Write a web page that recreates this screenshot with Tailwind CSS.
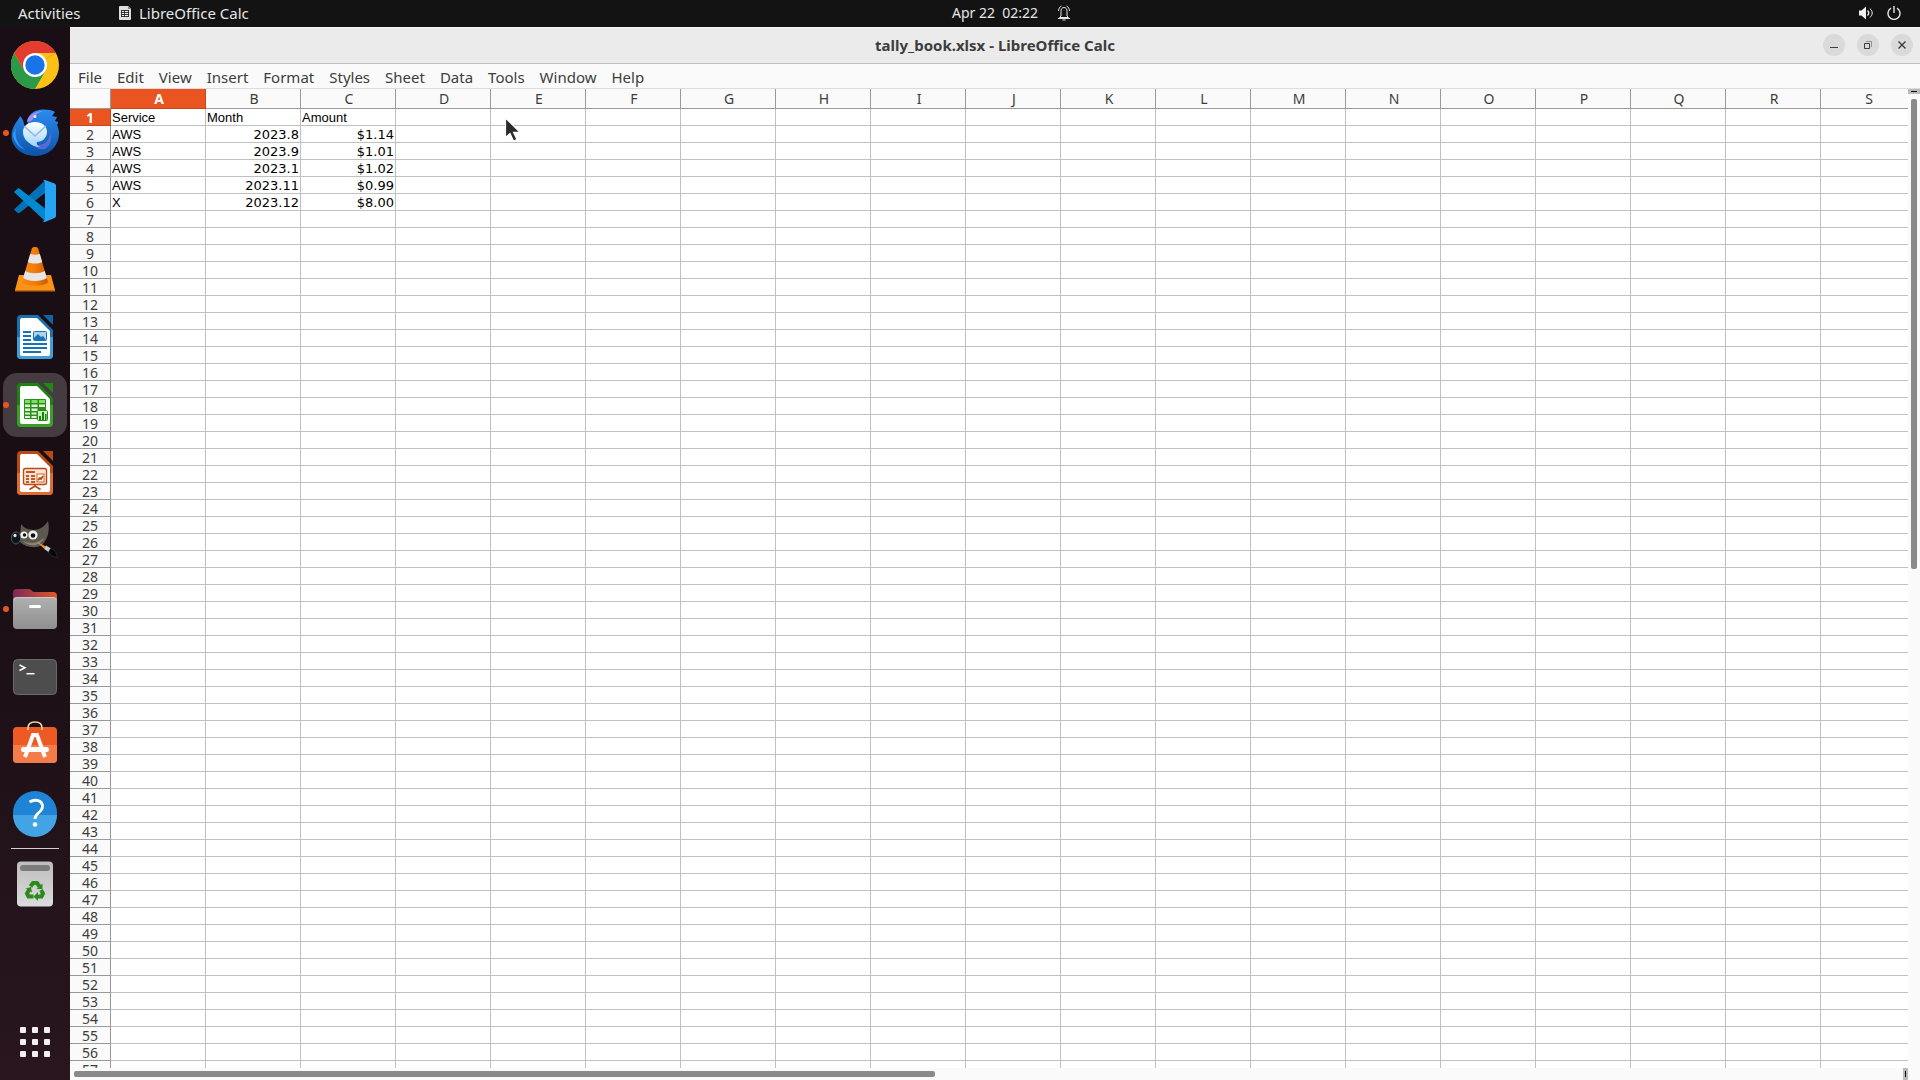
<!DOCTYPE html>
<html lang="en">
<head>
    <meta charset="UTF-8">
    <meta name="viewport" content="width=device-width, initial-scale=1.0">
    <title>tally_book.xlsx - LibreOffice Calc</title>
    <script src="https://cdn.jsdelivr.net/npm/@tailwindcss/browser@4"></script>
</head>
<body class="h-screen overflow-hidden flex flex-col bg-[#fafafa] font-['Noto_Sans',sans-serif] text-[14px] text-[#3d3d3d]">

    <!-- Top bar -->
    <header class="h-[27px] pb-px shrink-0 bg-[#131313] text-[#e6e6e6] grid grid-cols-[1fr_auto_1fr] items-center leading-5">
        <div class="flex items-center pl-[18px] text-[15px]">
            <button class="w-[101px] text-left">Activities</button>
            <button class="flex items-center gap-2">
                <svg class="w-3 h-[14px]" viewBox="0 0 12 14">
                    <path d="M1 0h8l3 3v10a1 1 0 0 1-1 1H1a1 1 0 0 1-1-1V1a1 1 0 0 1 1-1z" fill="#dedede"/>
                    <path d="M9 0l3 3H9z" fill="#8a8a8a"/>
                    <path d="M2 4h8v7H2z" fill="#333"/>
                    <path d="M3 5h2v1H3zM6 5h3v1H6zM3 7h2v1H3zM6 7h3v1H6zM3 9h2v1H3zM6 9h3v1H6z" fill="#eee"/>
                </svg>
                <span>LibreOffice Calc</span>
            </button>
        </div>
        <button class="flex items-center pl-[102px]">
            <span class="w-[106px] text-left whitespace-pre">Apr 22  02:22</span>
            <svg class="w-3 h-4" viewBox="0 0 12 16" fill="none" stroke="#e6e6e6">
                <path d="M3 11V6.5C3 4 4 2.5 6 2.5S9 4 9 6.5V11l1.500 1.500h-9z"/>
                <path d="M.5 6C.7 3.500 1.700 1.800 3.500 1M11.500 6C11.300 3.500 10.300 1.800 8.500 1"/>
                <path d="M0 13.500h12M4.500 15h3" stroke-width="1.200"/>
            </svg>
        </button>
        <div class="flex items-center justify-end gap-[14px] pr-[19px]">
            <button aria-label="Volume">
                <svg class="w-[14px] h-[14px]" viewBox="0 0 14 14" fill="none" stroke="#f0f0f0">
                    <path d="M0 4.500h2.500L7 .5v13L2.500 9.500H0z" fill="#f0f0f0" stroke="none"/>
                    <path d="M8.500 4.500c1.500 1.500 1.500 3.500 0 5" stroke-width="1.300"/>
                    <path d="M10.800 2.500c3.200 2.500 3.200 6.500 0 9"/>
                </svg>
            </button>
            <button aria-label="Power">
                <svg class="w-[14px] h-[14px]" viewBox="0 0 14 14" fill="none" stroke="#e6e6e6" stroke-width="1.400">
                    <path d="M4 2.200a6 6 0 1 0 6 0M7 0v7"/>
                </svg>
            </button>
        </div>
    </header>

    <div class="flex-1 min-h-0 flex">

        <!-- Dock -->
        <nav class="w-[70px] shrink-0 flex flex-col items-center pt-1 pb-1 bg-linear-to-b from-[#190e15] via-[#1a0e15] to-[#29161f]">
            <button class="w-full h-[68px] flex items-center justify-center" aria-label="Chrome">
                <svg class="w-12 h-12" viewBox="0 0 48 48">
                    <circle cx="24" cy="24" r="24" fill="#fbc116"/>
                    <path d="M24 24L3.200 12A24 24 0 0 1 44.800 12z" fill="#e33b2e"/>
                    <path d="M24 12h20.800L24 24z" fill="#fbc116"/>
                    <path d="M3.200 12A24 24 0 0 0 24 48L34.400 30 24 24 13.600 30z" fill="#2b9a48"/>
                    <path d="M3.200 12L13.600 30 24 24V12z" fill="#e33b2e"/>
                    <circle cx="24" cy="24" r="12" fill="#fff"/>
                    <circle cx="24" cy="24" r="9.700" fill="#1a73e8"/>
                </svg>
            </button>
            <button class="w-full h-[68px] flex items-center justify-center relative" aria-label="Thunderbird">
                <span class="absolute left-[3px] size-[6px] rounded-full bg-[#e95420]"></span>
                <svg class="w-12 h-12" viewBox="0 0 48 48">
                    <defs>
                        <linearGradient id="bird" x1="0" y1="0" x2="0" y2="1"><stop offset="0" stop-color="#2a8cf0"/><stop offset="1" stop-color="#0c53a8"/></linearGradient>
                        <linearGradient id="mail" x1="0" y1="0" x2="0" y2="1"><stop offset="0" stop-color="#fff"/><stop offset="1" stop-color="#9fd3fb"/></linearGradient>
                    </defs>
                    <path d="M9 7c-1 4-8 9-8.500 19C0 38 11 47 24 47c14 0 24-10 24-23 0-3-1-6-2-8 1-1 1-2 1-3l-3-1 2-4-5-1 3-4C36-1 24 0 19 6c-3 3-3 6-2 9l-4 5c1-5-1-10-4-13z" fill="url(#bird)"/>
                    <path d="M16 13c1-6 7-11 16-11-6 2-8 4-10 8-1 2-4 2-6 3z" fill="#a98df0"/>
                    <path d="M5 19c-2 9 2 18 10 22-7-2-13-9-13-16z" fill="#2f9df5"/>
                    <path d="M39 23c0 9-6 14-16 13 3 4 7 5 11 4 5-3 8-10 5-17z" fill="#6d6ee0" opacity=".75"/>
                    <circle cx="24" cy="7.500" r="1.500" fill="#d8f1ff"/>
                    <path d="M24 13c7 0 12 4 12 10s-5 10-10 10c-1 2 0 3 3 5-5 0-9-2-12-5-3-2-5-6-5-10 0-6 5-10 12-10z" fill="url(#mail)"/>
                    <path d="M13 17l11 10 11-10" fill="none" stroke="#88b8e6" stroke-width="1.500"/>
                </svg>
            </button>
            <button class="w-full h-[68px] flex items-center justify-center" aria-label="Visual Studio Code">
                <svg class="w-12 h-12" viewBox="0 0 48 48">
                    <path d="M3 32.500l3.500 3.200c.6.500 1.500.6 2.200.1L34 16V3.500z" fill="#0470b5"/>
                    <path d="M3 15l3.500-3.200c.6-.5 1.500-.6 2.200-.1L34 31.500V44z" fill="#0288d1"/>
                    <path d="M34 3l9.500 3.500c1 .5 1.500 1.200 1.500 2.200v30c0 1-.5 1.800-1.500 2.200L34 45c-1 0-2-.5-3-1.500 1.500 1 3 0 3-2V6c0-2-1.500-2.500-3-1.500 1-1 2-1.500 3-1.500z" fill="#25a5f3"/>
                </svg>
            </button>
            <button class="w-full h-[68px] flex items-center justify-center" aria-label="VLC">
                <svg class="w-12 h-12" viewBox="0 0 48 48">
                    <defs>
                        <linearGradient id="cone" x1="0" y1="0" x2="1" y2="0"><stop offset="0" stop-color="#f58a12"/><stop offset=".5" stop-color="#f37b0a"/><stop offset="1" stop-color="#c95a05"/></linearGradient>
                    </defs>
                    <path d="M8 30h32l4 15a1 1 0 0 1-1 1H5a1 1 0 0 1-1-1z" fill="#fb9416"/>
                    <path d="M4 45h40v1.500H4z" fill="#c7650a"/>
                    <path d="M21 3c1-1.500 5-1.500 6 0l10 34c-3 5-23 5-26 0z" fill="url(#cone)"/>
                    <path d="M19.200 9c3 1 6.600 1 9.600 0l2.400 8c-4 2-10 2-14.400 0zM14.300 26c5 3 14.400 3 19.400 0l2.200 7c-6 4-18 4-23.800 0z" fill="#e6e6e6"/>
                </svg>
            </button>
            <button class="w-full h-[68px] flex items-center justify-center" aria-label="LibreOffice Writer">
                <svg class="w-12 h-12" viewBox="0 0 48 48">
                    <path d="M10 2h17l15 15v25a4 4 0 0 1-4 4H10a4 4 0 0 1-4-4V6a4 4 0 0 1 4-4z" fill="#1a6fae"/>
                    <path d="M6 24h36v18a4 4 0 0 1-4 4H10a4 4 0 0 1-4-4z" fill="#3f9fd8"/>
                    <path d="M32 2h10v10z" fill="#12639f"/>
                    <path d="M11 5h15l13 13v23a2 2 0 0 1-2 2H11a2 2 0 0 1-2-2V7a2 2 0 0 1 2-2z" fill="#fff"/>
                    <path d="M12 18h8v2h-8zM12 22h8v2h-8zM12 26h8v2h-8zM12 30h24v2H12zM12 34h24v2H12zM12 38h18v2H12z" fill="#1673b5"/>
                    <rect x="22.500" y="18.500" width="13" height="9" rx="1" fill="#a8d4f2" stroke="#1673b5"/>
                    <path d="M23 27v-2l4-4 3 3 2-1 3 4z" fill="#1673b5"/>
                </svg>
            </button>
            <button class="w-full h-[68px] flex items-center justify-center relative" aria-label="LibreOffice Calc">
                <span class="w-16 h-16 rounded-[14px] bg-[#453c42] flex items-center justify-center">
                    <svg class="w-12 h-12" viewBox="0 0 48 48">
                        <path d="M10 2h17l15 15v25a4 4 0 0 1-4 4H10a4 4 0 0 1-4-4V6a4 4 0 0 1 4-4z" fill="#1f8012"/>
                        <path d="M6 24h36v18a4 4 0 0 1-4 4H10a4 4 0 0 1-4-4z" fill="#38a323"/>
                        <path d="M32 2h10v10z" fill="#1f8a10"/>
                        <path d="M11 5h15l13 13v23a2 2 0 0 1-2 2H11a2 2 0 0 1-2-2V7a2 2 0 0 1 2-2z" fill="#fff"/>
                        <rect x="13" y="18" width="22" height="20" rx="1" fill="#2a8f1a"/>
                        <path d="M14 19h5v3h-5zM20.500 19h6v3h-6zM28 19h6v3h-6z" fill="#7ee05f"/>
                        <path d="M14 23.500h5V26h-5zM20.500 23.500h6V26h-6zM28 23.500h6V26h-6zM14 27.500h5V30h-5zM20.500 27.500h6V30h-6zM14 31.500h5v2h-5zM20.500 31.500h5v2h-5zM14 35h5v2h-5zM20.500 35h5v2h-5z" fill="#dff5d8"/>
                        <rect x="26.500" y="29.500" width="10" height="10" rx="1" fill="#c5efb6" stroke="#2a8f1a"/>
                        <path d="M28 35h2v4h-2zM31 31h2v8h-2zM34 33h1.500v6H34z" fill="#1f8012"/>
                    </svg>
                </span>
                <span class="absolute left-[3px] size-[6px] rounded-full bg-[#e95420]"></span>
            </button>
            <button class="w-full h-[68px] flex items-center justify-center" aria-label="LibreOffice Impress">
                <svg class="w-12 h-12" viewBox="0 0 48 48">
                    <path d="M10 2h17l15 15v25a4 4 0 0 1-4 4H10a4 4 0 0 1-4-4V6a4 4 0 0 1 4-4z" fill="#b84a14"/>
                    <path d="M6 24h36v18a4 4 0 0 1-4 4H10a4 4 0 0 1-4-4z" fill="#df6c33"/>
                    <path d="M32 2h10v10z" fill="#b84a14"/>
                    <path d="M11 5h15l13 13v23a2 2 0 0 1-2 2H11a2 2 0 0 1-2-2V7a2 2 0 0 1 2-2z" fill="#fff"/>
                    <rect x="12.500" y="19.500" width="23" height="16" rx="2" fill="#fbe3d6" stroke="#b84a14" stroke-width="1.400"/>
                    <path d="M15 22h9v2h-9zM15 26h3v2h-3zM20 26h4v2h-4zM15 29h3v2h-3zM20 29h4v2h-4zM15 32h3v2h-3zM20 32h4v2h-4z" fill="#c4561d"/>
                    <rect x="26" y="25" width="7" height="8" fill="#fff" stroke="#d0622b"/>
                    <path d="M27 31l2-2 1 1 2-3M24 36v1.500M18.500 40.500L24 37l5.500 3.500" fill="none" stroke="#b84a14" stroke-width="1.800"/>
                </svg>
            </button>
            <button class="w-full h-[68px] flex items-center justify-center" aria-label="GIMP">
                <svg class="w-12 h-12" viewBox="0 0 48 48">
                    <path d="M10 7c3 4 6 5 12 6 7 0 12-4 15-9 2 9 0 17-5 23-5 5-17 4-23-2-1-5 1-12 1-18z" fill="#5d584e"/>
                    <path d="M12 24c7 3 14 3 21-3-3 8-14 10-21 3z" fill="#8a8478"/>
                    <ellipse cx="5" cy="21" rx="4.700" ry="6" fill="#10151a" stroke="#5b6970" stroke-width=".8"/>
                    <ellipse cx="4" cy="18.500" rx="1.600" ry="1.800" fill="#dfe6e8"/>
                    <circle cx="13" cy="18" r="3.600" fill="#f0f0f0"/>
                    <circle cx="13.500" cy="18" r="1.700" fill="#111"/>
                    <circle cx="22" cy="18" r="4.600" fill="#f0f0f0"/>
                    <circle cx="22" cy="18.500" r="2.300" fill="#111"/>
                    <path d="M26 25l10 5-1.500 3z" fill="#f0942a"/>
                    <path d="M35 28.500l5 3-2 4-4.500-3.500z" fill="#c9ced2"/>
                    <path d="M39.500 31.500c4 1 6 4 7 9-4 0-7-2-9-5.500z" fill="#050505" stroke="#3a3a3a" stroke-width=".6"/>
                </svg>
            </button>
            <button class="w-full h-[68px] flex items-center justify-center relative" aria-label="Files">
                <span class="absolute left-[3px] size-[6px] rounded-full bg-[#e95420]"></span>
                <svg class="w-12 h-12" viewBox="0 0 48 48">
                    <defs>
                        <linearGradient id="tab" x1="0" y1="0" x2="1" y2="0"><stop offset="0" stop-color="#7a2a57"/><stop offset="1" stop-color="#e4572a"/></linearGradient>
                        <linearGradient id="folder" x1="0" y1="0" x2="0" y2="1"><stop offset="0" stop-color="#b0b0b0"/><stop offset="1" stop-color="#8f8f8f"/></linearGradient>
                    </defs>
                    <path d="M6 4h12c2 0 3 3 5 3h19a4 4 0 0 1 4 4v12H2V8a4 4 0 0 1 4-4z" fill="url(#tab)"/>
                    <rect x="2" y="12" width="44" height="32" rx="4" fill="url(#folder)"/>
                    <path d="M3 15c0-2 1-2.500 3-2.500h36c2 0 3 .5 3 2.500" fill="none" stroke="#cfcfcf" stroke-width=".8"/>
                    <rect x="18" y="20" width="12" height="3" rx="1.500" fill="#fff"/>
                </svg>
            </button>
            <button class="w-full h-[68px] flex items-center justify-center" aria-label="Terminal">
                <svg class="w-12 h-12" viewBox="0 0 48 48" fill="none">
                    <rect x="2.500" y="6.500" width="43" height="35" rx="4" fill="#4d4d4d" stroke="#6a6a6a"/>
                    <path d="M8.500 12l5.500 2.700-5.500 2.800" stroke="#fff" stroke-width="1.500"/>
                    <path d="M15.500 20.700h8" stroke="#fff" stroke-width="1.500"/>
                </svg>
            </button>
            <button class="w-full h-[68px] flex items-center justify-center" aria-label="Ubuntu Software">
                <svg class="w-12 h-12" viewBox="0 0 48 48" fill="none">
                    <rect x="2" y="6" width="44" height="36" rx="4" fill="#ee5a24"/>
                    <path d="M2 24h44v14a4 4 0 0 1-4 4H6a4 4 0 0 1-4-4z" fill="#f47c48"/>
                    <path d="M17 9V7c0-4 3-6 7-6s7 2 7 6v2" stroke="#f6d9a8" stroke-width="1.600"/>
                    <path d="M14 36l8-22h4l8 22" stroke="#fff" stroke-width="4"/>
                    <rect x="10" y="26" width="28" height="5" rx="2.500" fill="#fff"/>
                </svg>
            </button>
            <button class="w-full h-[68px] flex items-center justify-center" aria-label="Help">
                <svg class="w-12 h-12" viewBox="0 0 48 48" fill="none">
                    <circle cx="24" cy="24" r="22" fill="#1f84d6"/>
                    <path d="M2 26h44a22 22 0 0 1-44 0z" fill="#42a4e5"/>
                    <path d="M18.500 13c6-3.500 13-1.500 13 4.500 0 6-7.500 6-7.500 12.500" stroke="#fff" stroke-width="2.800"/>
                    <circle cx="24" cy="35.500" r="2.300" fill="#fff"/>
                </svg>
            </button>
            <div class="w-12 h-[3px] flex items-center"><div class="w-full h-px bg-[#d4d0d2]"></div></div>
            <button class="w-full h-[68px] flex items-center justify-center" aria-label="Trash">
                <svg class="w-12 h-12" viewBox="0 0 48 48">
                    <defs>
                        <linearGradient id="bin" x1="0" y1="0" x2="0" y2="1"><stop offset="0" stop-color="#bdbdbd"/><stop offset="1" stop-color="#dcdcdc"/></linearGradient>
                    </defs>
                    <rect x="6" y="1.500" width="36" height="45" rx="4" fill="url(#bin)"/>
                    <rect x="9" y="5" width="30" height="6" rx="3" fill="#7b7b7b"/>
                    <g fill="none" stroke="#2c8a1c" stroke-width="4">
                        <path d="M19.500 26.500l2.500-3.500h4l2.500 3.500"/>
                        <path d="M30 30l2 3.500-1.500 3H26"/>
                        <path d="M22.500 36.500h-5l-1.500-3 2-3.500"/>
                    </g>
                    <path d="M31.500 23.500v5.500h-6zM27 32v9l-4.500-4.500zM14.500 28.500l5.500-1.500 1 5.500z" fill="#2c8a1c"/>
                </svg>
            </button>
            <button class="mt-auto w-full h-[68px] flex items-center justify-center" aria-label="Show Applications">
                <svg class="size-[30px]" viewBox="0 0 30 30" fill="#f2f0f1">
                    <rect width="6" height="6" rx="1"/><rect x="12" width="6" height="6" rx="1"/><rect x="24" width="6" height="6" rx="1"/>
                    <rect y="12" width="6" height="6" rx="1"/><rect x="12" y="12" width="6" height="6" rx="1"/><rect x="24" y="12" width="6" height="6" rx="1"/>
                    <rect y="24" width="6" height="6" rx="1"/><rect x="12" y="24" width="6" height="6" rx="1"/><rect x="24" y="24" width="6" height="6" rx="1"/>
                </svg>
            </button>
        </nav>

        <!-- Calc window -->
        <main class="flex-1 min-w-0 flex flex-col">
            <div class="h-[37px] pb-px shrink-0 bg-[#ebebeb] border-t border-t-[#f7f7f7] border-b border-b-[#bfbfbf] grid grid-cols-[1fr_auto_1fr] items-center">
                <h1 class="col-start-2 font-bold text-[15px] leading-5">tally_book.xlsx - LibreOffice Calc</h1>
                <div class="flex justify-end gap-3 pr-[7px]">
                    <button class="size-[22px] rounded-full bg-[#dadada]" aria-label="Minimize">
                        <svg viewBox="0 0 22 22" fill="none" stroke="#3d3d3d"><path d="M7 13.500h8"/></svg>
                    </button>
                    <button class="size-[22px] rounded-full bg-[#dadada]" aria-label="Restore">
                        <svg viewBox="0 0 22 22" fill="none" stroke="#3d3d3d"><path d="M7.500 9.500h5v5h-5z"/><path d="M9 7.500h5.500V13" stroke="#8f8f8f"/></svg>
                    </button>
                    <button class="size-[22px] rounded-full bg-[#dadada]" aria-label="Close">
                        <svg viewBox="0 0 22 22" fill="none" stroke="#3d3d3d" stroke-width="1.400"><path d="M7.500 7.500l7 7M14.500 7.500l-7 7"/></svg>
                    </button>
                </div>
            </div>

            <div class="h-[25px] shrink-0 flex items-center gap-[15px] pt-px pl-2 border-b border-[#dcdcdc] text-[15px] leading-5">
                <button>File</button>
                <button>Edit</button>
                <button>View</button>
                <button>Insert</button>
                <button>Format</button>
                <button>Styles</button>
                <button>Sheet</button>
                <button>Data</button>
                <button>Tools</button>
                <button>Window</button>
                <button>Help</button>
            </div>

            <div class="flex-1 min-h-0 flex">
                <div class="flex-1 min-w-0 overflow-hidden bg-white">
                    <table class="table-fixed border-separate border-spacing-0 w-[1846px]">
                        <thead>
                            <tr id="columnHeads">
                                <td class="w-[41px] h-5 p-0 bg-[#fafafa] border-r border-b border-[#999]"></td>
                            </tr>
                        </thead>
                        <tbody id="sheet"></tbody>
                    </table>
                </div>
                <div class="w-3 shrink-0 flex flex-col items-center">
                    <div class="w-3 h-[5px] bg-[#bababa] flex items-center justify-center"><div class="w-[6px] h-px bg-black"></div></div>
                    <div class="mt-[5px] w-[6px] h-[470px] rounded-[2px] bg-[#8a8a8a]"></div>
                </div>
            </div>

            <div class="h-3 shrink-0 flex items-center pl-1 pr-3">
                <div class="w-[861px] h-[6px] rounded-[2px] bg-[#8a8a8a]"></div>
                <div class="ml-auto w-[5px] h-3 bg-[#bababa] flex items-center justify-center"><div class="w-px h-[6px] bg-black"></div></div>
            </div>
        </main>
    </div>

    <!-- Mouse pointer -->
    <svg class="absolute left-[504px] top-[116px] w-[18px] h-[28px]" viewBox="0 0 18 28">
        <path d="M1.500 2v19.500l4.500-4 3.500 7.500 3.500-1.500-3.500-7.200h6.500z" fill="#2b2b2b" stroke="#fff" stroke-width="1.200"/>
    </svg>

    <script>
        const columns = 'ABCDEFGHIJKLMNOPQRS'.split('');
        const rowCount = 57;
        const data = [
            ['Service', 'Month', 'Amount'],
            ['AWS', '2023.8', '$1.14'],
            ['AWS', '2023.9', '$1.01'],
            ['AWS', '2023.1', '$1.02'],
            ['AWS', '2023.11', '$0.99'],
            ['X', '2023.12', '$8.00']
        ];

        const columnHeads = document.getElementById('columnHeads');
        columns.forEach((name, index) => {
            const th = document.createElement('th');
            th.scope = 'col';
            th.className = index === 0
                ? 'w-[95px] h-5 py-0 pl-[2px] pr-0 leading-4 font-bold text-white bg-[#e95420] border-r border-b border-[#c9451a]'
                : 'w-[95px] h-5 py-0 pl-[2px] pr-0 leading-4 font-normal bg-[#fafafa] border-r border-b border-[#999]';
            th.textContent = name;
            columnHeads.appendChild(th);
        });

        const sheet = document.getElementById('sheet');
        for (let row = 0; row < rowCount; row++) {
            const tr = document.createElement('tr');
            const th = document.createElement('th');
            th.scope = 'row';
            th.className = row === 0
                ? 'h-[17px] p-0 pt-[2px] leading-[14px] font-bold text-white bg-[#e95420] border-r border-b border-[#c9451a]'
                : 'h-[17px] p-0 pt-[2px] leading-[14px] font-normal bg-[#fafafa] border-r border-b border-[#999]';
            th.textContent = row + 1;
            tr.appendChild(th);

            columns.forEach((name, col) => {
                const td = document.createElement('td');
                // Amounts and months are right aligned, everything else is text
                td.className = row > 0 && col > 0
                    ? "h-[17px] px-px pt-[2px] pb-0 text-right text-[13px] leading-[14px] text-black font-['DejaVu_Sans',sans-serif] border-r border-b border-[#c0c0c0]"
                    : "h-[17px] px-px pt-[2px] pb-0 text-left text-[13px] leading-[14px] text-black font-['Liberation_Sans',sans-serif] border-r border-b border-[#c0c0c0]";
                td.textContent = (data[row] && data[row][col]) || '';
                tr.appendChild(td);
            });
            sheet.appendChild(tr);
        }
    </script>
</body>
</html>
